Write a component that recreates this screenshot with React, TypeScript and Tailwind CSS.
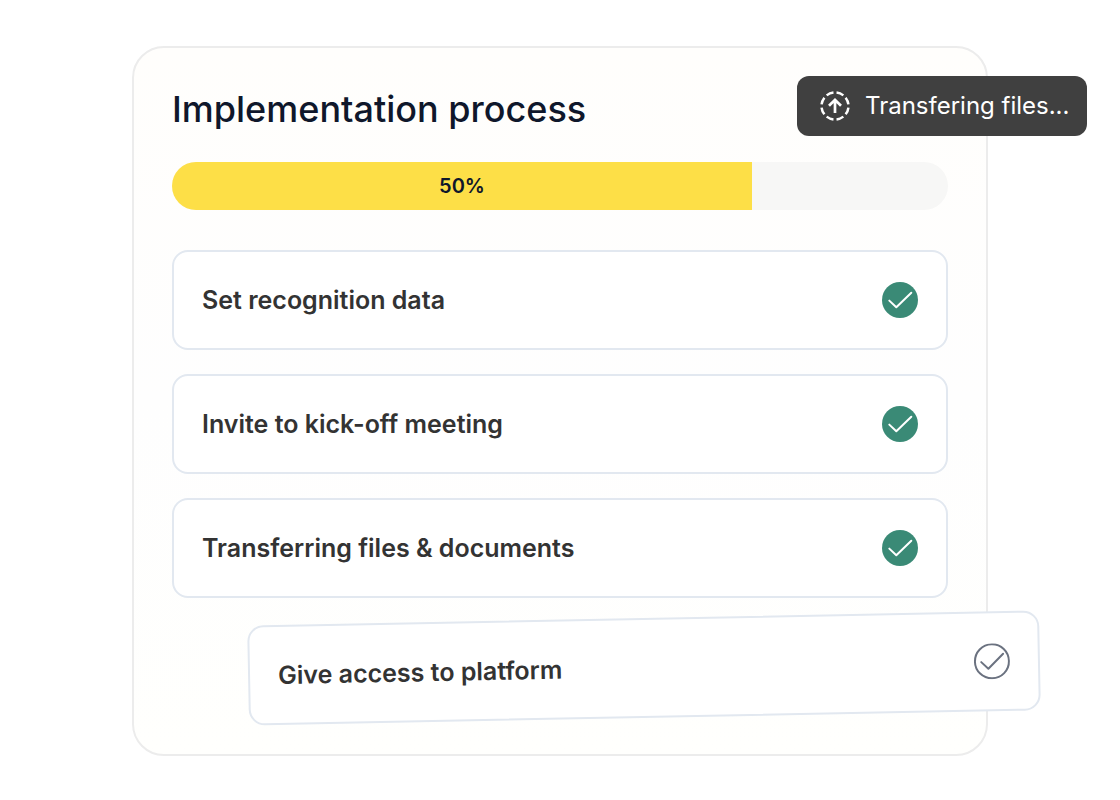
interface Step {
    label: string;
    done: boolean;
}

const steps: Step[] = [
    { label: 'Set recognition data', done: true },
    { label: 'Invite to kick-off meeting', done: true },
    { label: 'Transferring files & documents', done: true },
];

const nextStep: Step = { label: 'Give access to platform', done: false };

function StatusIcon({ done }: { done: boolean }) {
    return (
        <svg className="w-9 h-9 shrink-0" viewBox="0 0 36 36" fill="none" role="img" aria-label={done ? 'Done' : 'Pending'}>
            {done ? (
                <circle cx="18" cy="18" r="18" fill="#3a8a76" />
            ) : (
                <circle cx="18" cy="18" r="17" stroke="#6b7280" strokeWidth="2" />
            )}
            <path
                d="M7.3 18.6L14.3 25.3L29.3 10.7"
                stroke={done ? '#ffffff' : '#6b7280'}
                strokeWidth="2"
                strokeLinecap="round"
                strokeLinejoin="round"
            />
        </svg>
    );
}

function StepRow({ step }: { step: Step }) {
    return (
        <div className="flex items-center justify-between h-[100px] px-7 bg-white border-2 border-slate-200 rounded-2xl">
            <span className="text-[25px] leading-8 font-semibold text-[#333333]">{step.label}</span>
            <StatusIcon done={step.done} />
        </div>
    );
}

function UploadIcon() {
    return (
        <svg className="w-[30px] h-[30px] shrink-0" viewBox="0 0 30 30" fill="none" stroke="#ffffff" aria-hidden="true">
            {/* Ring made of eight dashes */}
            <circle cx="15" cy="15" r="13.5" strokeWidth="2.5" pathLength="80" strokeDasharray="7 3" strokeDashoffset="-1.5" />
            <path d="M15 22V9M9 14.8L15 8.8L21 14.8" strokeWidth="2.7" />
        </svg>
    );
}

export default function App() {
    const progress = 74.75;

    return (
        <main className="px-4 pt-[46px] pb-11 bg-white font-['Inter',sans-serif]">
            <section className="relative w-full max-w-[856px] mx-auto px-[38px] pt-9 pb-9 border-2 border-[#ececec] rounded-[32px] bg-linear-to-b from-[#fffefc] via-[#fefefe] to-[#fffffd]">
                <h1 className="text-4xl leading-[50px] font-medium text-slate-900">Implementation process</h1>

                <div
                    className="mt-7 h-12 rounded-full overflow-hidden bg-[#f7f7f6]"
                    role="progressbar"
                    aria-label="Implementation progress"
                    aria-valuenow={50}
                >
                    <div
                        className="flex items-center justify-center h-full bg-[#fddf47] text-xl font-semibold text-slate-900"
                        style={{ width: `${progress}%` }}
                    >
                        50%
                    </div>
                </div>

                <ul className="mt-10 flex flex-col gap-6">
                    {steps.map((step) => (
                        <li key={step.label}>
                            <StepRow step={step} />
                        </li>
                    ))}
                </ul>

                {/* Upcoming step, tilted and pulled out of the card */}
                <div className="mt-5 ml-[76px] -mr-[92px] -rotate-[1.1deg]">
                    <StepRow step={nextStep} />
                </div>

                <div
                    className="absolute top-7 -right-[101px] flex items-center gap-[15px] w-[290px] h-[60px] pl-[23px] rounded-xl bg-[#404040] text-2xl text-white"
                    role="status"
                >
                    <UploadIcon />
                    <span className="whitespace-nowrap">Transfering files...</span>
                </div>
            </section>
        </main>
    );
}
